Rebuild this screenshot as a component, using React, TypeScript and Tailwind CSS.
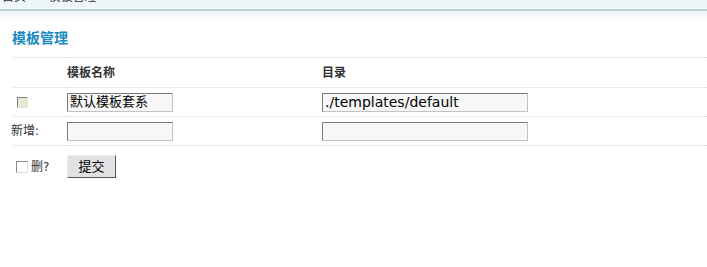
import React from 'react'

const rows = [
  { id: 1, name: '默认模板套系', dir: './templates/default' },
]

const inputCls =
  'h-[19px] border border-t-[#7b7b7b] border-l-[#7b7b7b] border-b-[#c3c3c3] border-r-[#c3c3c3] bg-[#f7f7f7] px-[2px] text-[13px] text-black outline-none'

const App = () => {
  return (
    <div className="min-h-[267px] w-[707px] bg-white text-[12px] text-[#333] font-['DejaVu_Sans','Noto_Sans_CJK_SC',sans-serif]">
      <div className="h-[8px] overflow-hidden bg-[#eef6fa] pl-[2px]">
        <div className="-mt-[9px] leading-[12px] text-[#333]">首页 &nbsp;»&nbsp; 模板管理</div>
      </div>
      <div className="h-[1px] bg-white" />
      <div className="h-[2px] bg-[#b9d5d3]" />
      <div className="h-[10px] bg-gradient-to-b from-[#eaf2fb] to-white" />

      <div className="pl-[12px]">
        <h2 className="mt-[8px] text-[14px] font-bold leading-[18px] text-[#1a8bc1]">模板管理</h2>

        <table className="mt-[10px] w-full border-collapse">
          <tbody>
            <tr className="h-[30px] border-t border-dotted border-[#d8d8d8]">
              <td className="w-[55px]" />
              <td className="w-[255px] font-bold">模板名称</td>
              <td className="font-bold">目录</td>
            </tr>
            {rows.map((r) => (
              <tr key={r.id} className="h-[29px] border-t border-dotted border-[#d8d8d8]">
                <td className="pl-[5px]">
                  <span className="block h-[11px] w-[11px] border border-t-[#808080] border-l-[#808080] border-b-[#e6e6d8] border-r-[#e6e6d8] bg-[#e8e6d4]" />
                </td>
                <td>
                  <input className={inputCls + ' w-[106px]'} defaultValue={r.name} />
                </td>
                <td>
                  <input className={inputCls + ' w-[206px] text-[14px]'} defaultValue={r.dir} />
                </td>
              </tr>
            ))}
            <tr className="h-[29px] border-y border-dotted border-[#d8d8d8]">
              <td>
                <span className="-ml-[1px]">新增:</span>
              </td>
              <td>
                <input className={inputCls + ' w-[106px]'} />
              </td>
              <td>
                <input className={inputCls + ' w-[206px]'} />
              </td>
            </tr>
            <tr>
              <td className="pl-[4px] pt-[9px] align-top">
                <div className="flex h-[23px] items-center gap-[3px] text-[#333]">
                  <span className="block h-[12px] w-[12px] border border-t-[#8a8a8a] border-l-[#8a8a8a] border-b-[#dedede] border-r-[#dedede] bg-white" />
                  <span className="text-[#333]">删?</span>
                </div>
              </td>
              <td className="pt-[9px] align-top">
                <button className="h-[23px] w-[49px] border border-t-[#f0f0f0] border-l-[#f0f0f0] border-b-[#555] border-r-[#555] bg-[#e2e2e2] text-[13px] text-black">
                  提交
                </button>
              </td>
              <td />
            </tr>
          </tbody>
        </table>
      </div>
    </div>
  )
}

export default App
